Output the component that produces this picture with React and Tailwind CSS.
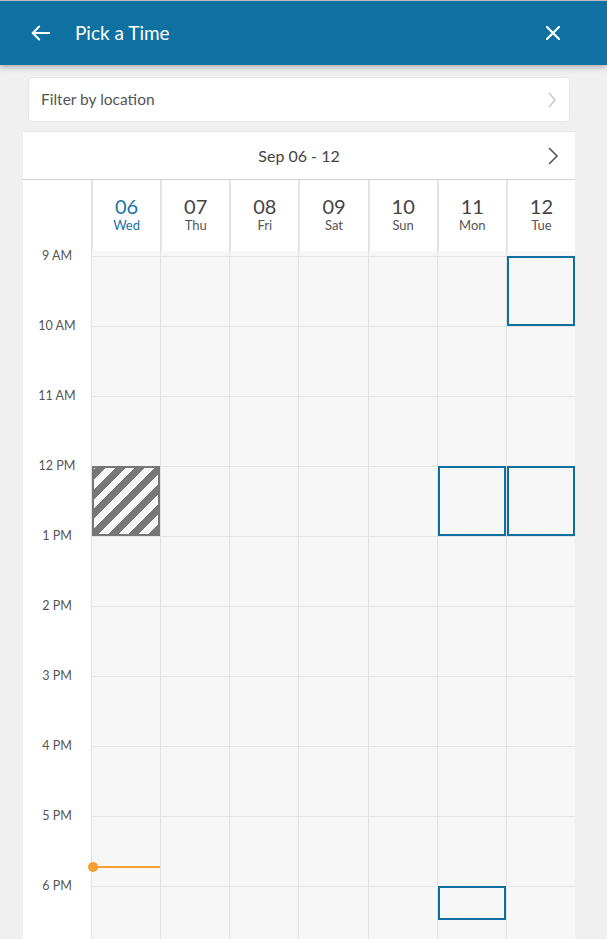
import React from 'react';

const days = [
  { num: '06', name: 'Wed', today: true },
  { num: '07', name: 'Thu' },
  { num: '08', name: 'Fri' },
  { num: '09', name: 'Sat' },
  { num: '10', name: 'Sun' },
  { num: '11', name: 'Mon' },
  { num: '12', name: 'Tue' },
];

const hours = ['9 AM', '10 AM', '11 AM', '12 PM', '1 PM', '2 PM', '3 PM', '4 PM', '5 PM', '6 PM', ''];

// slots per day column index: top / height in px from grid top
const slots = {
  0: [{ top: 215, height: 70, kind: 'busy' }],
  5: [
    { top: 215, height: 70, kind: 'open' },
    { top: 635, height: 34, kind: 'open' },
  ],
  6: [
    { top: 5, height: 70, kind: 'open' },
    { top: 215, height: 70, kind: 'open' },
  ],
};

const App = () => {
  return (
    <div className="h-screen overflow-hidden bg-[#f0f0f0] font-['Lato',sans-serif] border-t border-[#bdbdbd]">
      {/* Top bar */}
      <div className="relative z-10 h-[64px] bg-[#0f71a1] flex items-center px-[30px] shadow-[0_2px_6px_rgba(0,0,0,0.3)]">
        <svg width="22" height="22" viewBox="0 0 24 24" fill="none" stroke="white" strokeWidth="2.2" strokeLinecap="round" strokeLinejoin="round">
          <path d="M21 12H3" />
          <path d="M10 5l-7 7 7 7" />
        </svg>
        <span className="ml-[23px] text-white text-[19px]">Pick a Time</span>
        <div className="flex-1" />
        <svg width="14" height="14" viewBox="0 0 14 14" stroke="white" strokeWidth="2.2" strokeLinecap="round" className="mr-[17px]">
          <path d="M1 1l12 12M13 1L1 13" />
        </svg>
      </div>

      {/* Filter */}
      <div className="ml-[28px] mr-[37px] mt-[12px] h-[45px] bg-white rounded border border-[#e6e6e6] flex items-center pl-[12px] pr-[12px]">
        <span className="text-[15.5px] text-[#555]">Filter by location</span>
        <div className="flex-1" />
        <svg width="10" height="18" viewBox="0 0 10 18" fill="none" stroke="#c8c8c8" strokeWidth="1.5">
          <path d="M2 2l6 7-6 7" />
        </svg>
      </div>

      {/* Calendar card */}
      <div className="ml-[23px] mr-[32px] mt-[9px] bg-white border-t border-[#e6e6e6]">
        <div className="relative h-[48px] flex items-center justify-center border-b border-[#d4d4d4]">
          <span className="text-[16px] text-[#444]">Sep 06 - 12</span>
          <svg width="12" height="20" viewBox="0 0 12 20" fill="none" stroke="#555" strokeWidth="1.6" className="absolute right-[16px]">
            <path d="M2 2l8 8-8 8" />
          </svg>
        </div>

        {/* Day header */}
        <div className="flex h-[71px]">
          <div className="w-[68px] shrink-0" />
          <div className="flex-1 grid grid-cols-7">
            {days.map((d) => (
              <div key={d.num} className="border-l-2 border-[#e4e4e4] flex flex-col items-center pt-[14px]">
                <span className={d.today ? 'text-[20px] leading-[24px] text-[#1a73a8]' : 'text-[20px] leading-[24px] text-[#444]'}>{d.num}</span>
                <span className={d.today ? 'text-[13px] leading-[15px] text-[#1a73a8]' : 'text-[13px] leading-[15px] text-[#555]'}>{d.name}</span>
              </div>
            ))}
          </div>
        </div>

        {/* Grid body */}
        <div className="flex">
          <div className="w-[68px] shrink-0 bg-white pt-[5px]">
            {hours.map((h, i) => (
              <div key={i} className="h-[70px] relative">
                <span className="absolute top-0 left-0 right-0 -translate-y-1/2 text-center text-[12.5px] text-[#555]">{h}</span>
              </div>
            ))}
          </div>
          <div className="flex-1 grid grid-cols-7 bg-[#f7f7f7]">
            {days.map((d, i) => (
              <div key={d.num} className="relative border-l border-[#e2e2e2] pt-[5px]">
                {hours.map((h, j) => (
                  <div key={j} className="h-[70px] border-t border-[#e4e4e4]" />
                ))}
                {(slots[i] || []).map((s, k) => (
                  <div
                    key={k}
                    className={
                      s.kind === 'busy'
                        ? 'absolute left-0 right-0 border-2 border-[#777] bg-[repeating-linear-gradient(-45deg,#777_0px,#777_7px,#f7f7f7_7px,#f7f7f7_14px)]'
                        : 'absolute left-0 right-0 border-2 border-[#0e6fa0]'
                    }
                    style={{ top: s.top, height: s.height }}
                  />
                ))}
                {i === 0 && (
                  <div className="absolute left-0 right-0 top-[615px] h-[2px] bg-[#f5a030]">
                    <div className="absolute -left-[4px] -top-[4px] w-[10px] h-[10px] rounded-full bg-[#f5a030]" />
                  </div>
                )}
              </div>
            ))}
          </div>
        </div>
      </div>
    </div>
  );
};

export default App;
